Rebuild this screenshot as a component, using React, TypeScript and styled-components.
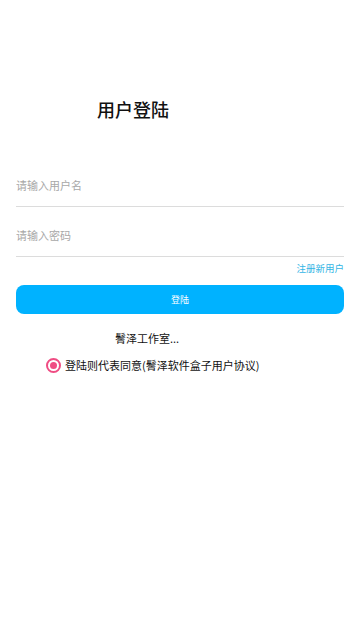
import React from "react";
import styled, { createGlobalStyle } from "styled-components";

const Global = createGlobalStyle`
  html, body { margin: 0; padding: 0; background: #fff; }
  body { font-family: "Noto Sans CJK SC", "Noto Sans", sans-serif; }
  * { box-sizing: border-box; }
`;

const Page = styled.div`
  width: 360px;
  min-height: 640px;
  background: #fff;
  padding: 0 16px;
  display: flex;
  flex-direction: column;
`;

const Title = styled.h1`
  margin: 96px 0 0 81px;
  font-size: 18px;
  line-height: 26px;
  font-weight: 500;
  color: #111;
`;

const Form = styled.div`
  margin-top: 42px;
  display: flex;
  flex-direction: column;
`;

const Field = styled.label`
  display: flex;
  align-items: center;
  height: 43px;
  border-bottom: 1px solid #dcdcdc;
  & + & { margin-top: 7px; }
`;

const Input = styled.input`
  flex: 1;
  border: none;
  outline: none;
  padding: 0;
  background: transparent;
  font-family: inherit;
  font-size: 11px;
  line-height: 16px;
  color: #333;
  &::placeholder { color: #a8a8a8; }
`;

const RegisterRow = styled.div`
  display: flex;
  justify-content: flex-end;
  margin-top: 4px;
`;

const RegisterLink = styled.a`
  font-size: 9.5px;
  line-height: 14px;
  color: #33b5e5;
  text-decoration: none;
`;

const LoginButton = styled.button`
  margin-top: 10px;
  height: 29px;
  width: 100%;
  border: none;
  border-radius: 8px;
  background: #00b2ff;
  color: #fff;
  font-family: inherit;
  font-size: 9px;
  padding: 0;
`;

const Studio = styled.div`
  margin: 16px 0 0 99px;
  font-size: 11px;
  line-height: 16px;
  color: #111;
`;

const AgreeRow = styled.div`
  display: flex;
  align-items: center;
  gap: 4px;
  margin: 11px 0 0 30px;
  font-size: 11px;
  line-height: 16px;
  color: #111;
`;

const Radio = styled.span<{ $checked: boolean }>`
  width: 15px;
  height: 15px;
  border-radius: 50%;
  border: 2px solid #ef4c83;
  display: flex;
  align-items: center;
  justify-content: center;
  &::after {
    content: "";
    width: 7px;
    height: 7px;
    border-radius: 50%;
    background: ${(p) => (p.$checked ? "#ef4c83" : "transparent")};
  }
`;

export default function App() {
  return (
    <>
      <Global />
      <Page>
        <Title>用户登陆</Title>
        <Form>
          <Field>
            <Input placeholder="请输入用户名" />
          </Field>
          <Field>
            <Input type="password" placeholder="请输入密码" />
          </Field>
        </Form>
        <RegisterRow>
          <RegisterLink href="#">注册新用户</RegisterLink>
        </RegisterRow>
        <LoginButton>登陆</LoginButton>
        <Studio>鬌泽工作室...</Studio>
        <AgreeRow>
          <Radio $checked />
          <span>登陆则代表同意(鬌泽软件盒子用户协议)</span>
        </AgreeRow>
      </Page>
    </>
  );
}
